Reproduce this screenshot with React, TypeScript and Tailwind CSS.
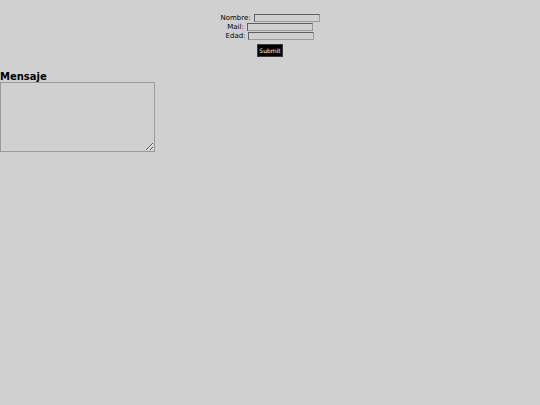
import React from "react";

export default function App() {
  const inputCls =
    "h-[8px] w-[66px] bg-transparent border border-t-[#5f5f5f] border-l-[#5f5f5f] border-r-[#9a9a9a] border-b-[#9a9a9a] p-0 outline-none";
  return (
    <div
      className="min-h-screen w-full bg-[#d0d0d0] text-black"
      style={{ fontFamily: '"DejaVu Sans", Verdana, sans-serif' }}
    >
      <form className="flex flex-col items-center pt-[13px]">
        <div className="flex h-[9px] items-center gap-[3px] text-[7px] leading-none">
          <span className="pt-[2px]">Nombre:</span>
          <input className={inputCls} />
        </div>
        <div className="flex h-[9px] items-center gap-[3px] text-[7px] leading-none">
          <span className="pt-[2px]">Mail:</span>
          <input className={inputCls} />
        </div>
        <div className="flex h-[9px] items-center gap-[3px] text-[7px] leading-none">
          <span className="pt-[2px]">Edad:</span>
          <input className={inputCls} />
        </div>
        <button
          type="button"
          className="mt-[4px] flex h-[13px] w-[26px] items-center justify-center border border-[#3a3a3a] bg-black text-[6px] leading-none text-white"
        >
          Submit
        </button>
      </form>
      <h2 className="mt-[14px] text-[10px] font-bold leading-[11px]">Mensaje</h2>
      <textarea className="block h-[70px] w-[155px] border border-[#9a9a9a] bg-transparent p-0 outline-none" />
    </div>
  );
}
